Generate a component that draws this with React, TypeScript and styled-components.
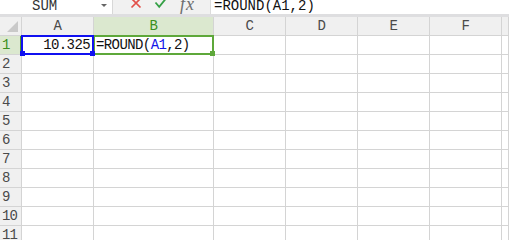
import React from 'react'
import styled, { createGlobalStyle, css } from 'styled-components'

const GlobalStyle = createGlobalStyle`
  html, body {
    margin: 0;
    padding: 0;
    background: #ffffff;
  }
  body {
    font-family: "Liberation Mono", monospace;
    overflow: hidden;
  }
`

const CELL_FONT = `"Liberation Mono", "DejaVu Sans Mono", monospace`
const GRID_LINE = '#d4d4d4'

const Page = styled.div`
  width: 509px;
  height: 240px;
  overflow: hidden;
  display: flex;
  flex-direction: column;
`

const FormulaBar = styled.div`
  height: 14px;
  flex: none;
  display: flex;
  overflow: hidden;
  font-family: ${CELL_FONT};
  font-size: 14px;
  color: #222;
`

const NameBox = styled.div`
  width: 112px;
  flex: none;
  background: #fff;
  border-right: 1px solid #d8d8d8;
  display: flex;
  align-items: flex-start;
  position: relative;
`

const NameText = styled.span`
  margin-top: -4px;
  line-height: 20px;
  padding-left: 32px;
  color: #333;
`

const DropArrow = styled.span`
  position: absolute;
  right: 5px;
  top: 4px;
  width: 0;
  height: 0;
  border-left: 3px solid transparent;
  border-right: 3px solid transparent;
  border-top: 3px solid #666;
`

const ActionArea = styled.div`
  width: 97px;
  flex: none;
  background: #f1f1f1;
  display: flex;
  align-items: flex-start;
  padding-left: 17px;
  gap: 12px;
  box-sizing: border-box;
`

const FxText = styled.span`
  font-family: "Liberation Serif", serif;
  font-style: italic;
  font-size: 18px;
  line-height: 18px;
  margin-top: -5px;
  color: #6e6e6e;
  letter-spacing: 1px;
`

const FormulaInput = styled.div`
  flex: 1;
  background: #fff;
  border-left: 1px solid #dcdcdc;
  display: flex;
  align-items: flex-start;
`

const FormulaText = styled.span`
  margin-top: -4px;
  line-height: 20px;
  padding-left: 3px;
  color: #111;
`

const Strip = styled.div`
  height: 3px;
  flex: none;
  background: #dedee0;
`

const Sheet = styled.div`
  flex: 1;
  display: grid;
  grid-template-columns: 22px 72px 120px 72px 72px 72px 72px 1fr;
  grid-auto-rows: 19px;
  font-family: ${CELL_FONT};
  font-size: 14px;
  letter-spacing: -0.6px;
`

const HeaderCell = styled.div<{ $active?: boolean }>`
  box-sizing: border-box;
  background: ${(p) => (p.$active ? '#dbe8cf' : '#f0f0f0')};
  border-right: 1px solid ${GRID_LINE};
  border-bottom: 1px solid ${(p) => (p.$active ? '#5ea83a' : GRID_LINE)};
  color: ${(p) => (p.$active ? '#3b8f20' : '#4a4a4a')};
  display: flex;
  align-items: center;
  justify-content: center;
  line-height: 18px;
`

const CornerCell = styled.div`
  box-sizing: border-box;
  background: #f0f0f0;
  border-right: 1px solid ${GRID_LINE};
  border-bottom: 1px solid ${GRID_LINE};
  position: relative;
`

const CornerTriangle = styled.span`
  position: absolute;
  right: 3px;
  bottom: 3px;
  width: 0;
  height: 0;
  border-left: 11px solid transparent;
  border-bottom: 11px solid #c9c9c9;
`

const RowHead = styled.div<{ $active?: boolean }>`
  box-sizing: border-box;
  background: ${(p) => (p.$active ? '#dbe8cf' : '#f0f0f0')};
  border-right: ${(p) => (p.$active ? '2px solid #4f9a2c' : `1px solid ${GRID_LINE}`)};
  border-bottom: 1px solid ${GRID_LINE};
  color: ${(p) => (p.$active ? '#3b8f20' : '#4a4a4a')};
  padding-left: 2px;
  line-height: 18px;
  letter-spacing: -1px;
`

const Cell = styled.div<{ $align?: 'left' | 'right' }>`
  box-sizing: border-box;
  border-right: 1px solid ${GRID_LINE};
  border-bottom: 1px solid ${GRID_LINE};
  position: relative;
  line-height: 18px;
  white-space: nowrap;
  color: #111;
  text-align: ${(p) => p.$align ?? 'left'};
  padding: ${(p) => (p.$align === 'right' ? '0 3px 0 0' : '0 0 0 2px')};
`

const Selection = styled.div<{ $color: string; $z: number }>`
  position: absolute;
  left: -1px;
  top: -1px;
  right: -1px;
  bottom: -1px;
  border: 2px solid ${(p) => p.$color};
  z-index: ${(p) => p.$z};
  pointer-events: none;
`

const Handle = styled.span<{ $color: string; $side: 'left' | 'right' }>`
  position: absolute;
  bottom: -3px;
  width: 5px;
  height: 5px;
  background: ${(p) => p.$color};
  ${(p) =>
    p.$side === 'left'
      ? css`
          left: -3px;
        `
      : css`
          right: -3px;
        `}
`

const Ref = styled.span`
  color: #1414e8;
`

const columns = ['A', 'B', 'C', 'D', 'E', 'F', '']
const rowCount = 12

const CancelIcon = () => (
  <svg width="12" height="12" viewBox="0 0 12 12" style={{ marginTop: -3 }}>
    <path d="M1.5 1.5 L10.5 10.5 M10.5 1.5 L1.5 10.5" stroke="#e2504a" strokeWidth="1.7" fill="none" />
  </svg>
)

const ConfirmIcon = () => (
  <svg width="14" height="12" viewBox="0 0 14 12" style={{ marginTop: -3 }}>
    <path d="M1.5 5.5 L5.2 9.8 L12.8 0.5" stroke="#35a046" strokeWidth="1.8" fill="none" />
  </svg>
)

const App = (): JSX.Element => {
  return (
    <Page>
      <GlobalStyle />
      <FormulaBar>
        <NameBox>
          <NameText>SUM</NameText>
          <DropArrow />
        </NameBox>
        <ActionArea>
          <CancelIcon />
          <ConfirmIcon />
          <FxText>fx</FxText>
        </ActionArea>
        <FormulaInput>
          <FormulaText>=ROUND(A1,2)</FormulaText>
        </FormulaInput>
      </FormulaBar>
      <Strip />
      <Sheet>
        <CornerCell>
          <CornerTriangle />
        </CornerCell>
        {columns.map((col, i) => (
          <HeaderCell key={i} $active={col === 'B'}>
            {col}
          </HeaderCell>
        ))}
        {Array.from({ length: rowCount }, (_, r) => (
          <React.Fragment key={r}>
            <RowHead $active={r === 0}>{r + 1}</RowHead>
            {columns.map((col, c) => {
              if (r === 0 && col === 'A') {
                return (
                  <Cell key={c} $align="right">
                    10.325
                    <Selection $color="#1010f0" $z={3}>
                      <Handle $color="#1010f0" $side="left" />
                      <Handle $color="#1010f0" $side="right" />
                    </Selection>
                  </Cell>
                )
              }
              if (r === 0 && col === 'B') {
                return (
                  <Cell key={c}>
                    =ROUND(<Ref>A1</Ref>,2)
                    <Selection $color="#5ea83a" $z={2}>
                      <Handle $color="#5ea83a" $side="right" />
                    </Selection>
                  </Cell>
                )
              }
              return <Cell key={c} />
            })}
          </React.Fragment>
        ))}
      </Sheet>
    </Page>
  )
}

export default App
